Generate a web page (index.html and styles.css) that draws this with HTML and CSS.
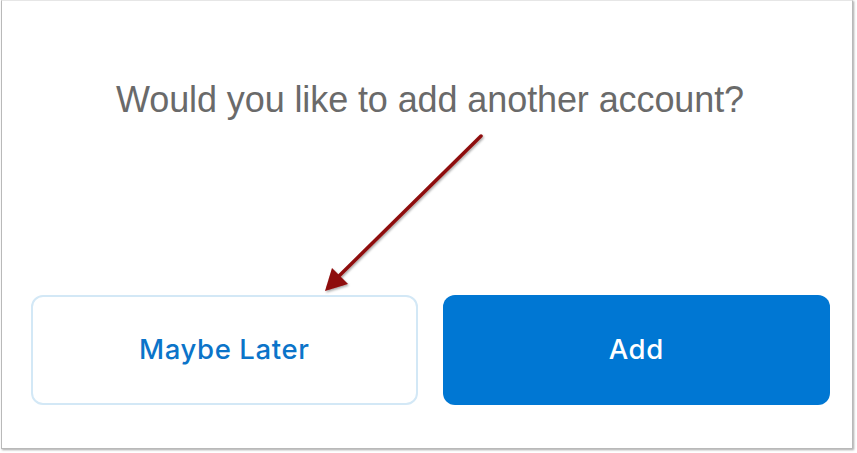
FILE: index.html
```html
<!DOCTYPE html>
<html>
<head>
<meta charset="utf-8">
<link rel="stylesheet" href="styles.css">
</head>
<body>
<div class="frame">
  <p class="question">Would you like to add another account?</p>
  <div class="actions">
    <button class="btn btn-secondary">Maybe Later</button>
    <button class="btn btn-primary">Add</button>
  </div>
  <svg class="arrow" width="857" height="453" viewBox="0 0 857 453">
    <defs>
      <filter id="sh" x="-20%" y="-20%" width="140%" height="140%">
        <feDropShadow dx="1" dy="1.5" stdDeviation="1.2" flood-color="#000" flood-opacity="0.35"/>
      </filter>
    </defs>
    <g filter="url(#sh)">
      <line x1="481" y1="136" x2="338" y2="277" stroke="#8e0a0a" stroke-width="3.5" stroke-linecap="round"/>
      <polygon points="325,291 332,268 348,284" fill="#8e0a0a"/>
    </g>
  </svg>
</div>
</body>
</html>
```
FILE: styles.css
```css
html, body {
  margin: 0;
  padding: 0;
  background: #ffffff;
}
body {
  width: 857px;
  height: 453px;
  overflow: hidden;
  font-family: "Liberation Sans", Arial, sans-serif;
}
.frame {
  position: relative;
  margin-left: 1px;
  width: 852px;
  height: 449px;
  border: 1px solid #b9b9b9;
  border-top-color: #e6e6e6;
  box-shadow: 1px 1px 2px rgba(0,0,0,0.35);
  background: #ffffff;
  box-sizing: border-box;
  display: flex;
  flex-direction: column;
}
.question {
  margin: 79px 0 0 0;
  padding-left: 6px;
  text-align: center;
  font-size: 36px;
  line-height: 40px;
  letter-spacing: -0.1px;
  color: #6a6a6a;
}
.actions {
  display: flex;
  gap: 25px;
  padding: 0 22px 0 29px;
  margin-top: 175px;
}
.btn {
  height: 110px;
  border-radius: 12px;
  font-family: Inter, "Liberation Sans", Arial, sans-serif;
  font-size: 27.5px;
  font-weight: 500;
  letter-spacing: 0.6px;
  cursor: pointer;
  padding: 0 0 2px 0;
}
.btn-secondary {
  width: 387px;
  background: #ffffff;
  border: 2px solid #d3e8f6;
  color: #0b74c9;
}
.btn-primary {
  width: 388px;
  background: #0077d3;
  border: none;
  color: #ffffff;
}
.arrow {
  position: absolute;
  left: -2px;
  top: -1px;
  pointer-events: none;
}
```
